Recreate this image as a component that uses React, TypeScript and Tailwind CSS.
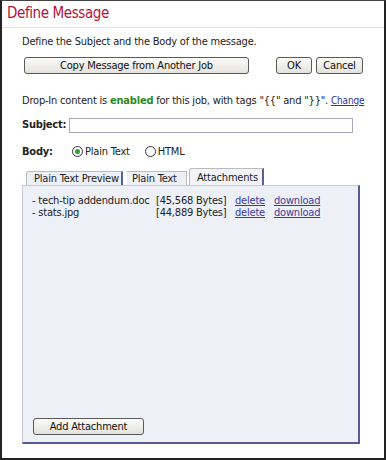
import React from "react";

const font = { fontFamily: '"DejaVu Sans Condensed", "DejaVu Sans", Tahoma, sans-serif' };

function Btn({ children, className = "" }: { children: React.ReactNode; className?: string }) {
    return (
        <button
            className={`h-[17px] shrink-0 whitespace-nowrap rounded-[3px] border border-[#5a5a5a] bg-gradient-to-b from-[#fbfbf8] to-[#e4e2dc] text-[11px] leading-[15px] text-[#111] ${className}`}
        >
            {children}
        </button>
    );
}

function Radio({ checked, label }: { checked?: boolean; label: string }) {
    return (
        <label className="flex items-center gap-[2px]">
            <span className="flex h-[11px] w-[11px] items-center justify-center rounded-full border border-[#333] bg-white">
                {checked && <span className="h-[5px] w-[5px] rounded-full bg-[#3a9a3a]" />}
            </span>
            <span>{label}</span>
        </label>
    );
}

const files = [
    { name: "- tech-tip addendum.doc", size: "[45,568 Bytes]" },
    { name: "- stats.jpg", size: "[44,889 Bytes]" },
];

export default function App() {
    return (
        <div style={font} className="flex h-[460px] w-[386px] flex-col whitespace-nowrap border-x-2 border-b-2 border-t border-x-[#222] border-b-[#222] border-t-[#444] bg-white text-[11px] tracking-[-0.2px] text-[#222]">
            <div className="h-[27px] shrink-0 border-b border-[#e4e4e4] pl-[5px] pt-[3px] text-[15px] leading-[18px] tracking-[-0.4px] text-[#b01240]">
                Define Message
            </div>

            <div className="flex flex-1 flex-col pl-[20px] pr-[22px]">
                <p className="mt-[7px] leading-[13px]">Define the Subject and the Body of the message.</p>

                <div className="mt-[9px] flex items-center">
                    <Btn className="ml-[2px] w-[225px]">Copy Message from Another Job</Btn>
                    <Btn className="ml-[27px] w-[36px]">OK</Btn>
                    <Btn className="ml-[4px] w-[47px]">Cancel</Btn>
                </div>

                <p className="mt-[20px] leading-[13px]">
                    Drop-In content is <b className="text-[#2d8a22]">enabled</b> for this job, with tags "{"{{"}" and "{"}}"}".{" "}
                    <a className="text-[10px] text-[#3333a0] underline">Change</a>
                </p>

                <div className="mt-[10px] flex items-center">
                    <span className="w-[47px] font-bold">Subject:</span>
                    <input className="h-[15px] w-[284px] border border-[#a8a8b8] bg-white outline-none" />
                </div>

                <div className="mt-[11px] flex items-center leading-[13px]">
                    <span className="w-[50px] font-bold">Body:</span>
                    <Radio checked label="Plain Text" />
                    <span className="ml-[15px]">
                        <Radio label="HTML" />
                    </span>
                </div>

                <div className="mt-[10px] flex shrink-0 items-end pl-[4px]">
                    <div className="h-[14px] w-[97px] rounded-tl-[3px] border-l border-t border-r-2 border-l-[#bbb] border-t-[#bbb] border-r-[#5c5c96] bg-[#eef0f8] pl-[7px] leading-[13px]">
                        Plain Text Preview
                    </div>
                    <div className="ml-[4px] h-[14px] w-[60px] border-t border-r border-t-[#bbb] border-r-[#bbb] bg-[#eef0f8] pl-[5px] leading-[13px]">
                        Plain Text
                    </div>
                    <div className="ml-[2px] h-[17px] w-[75px] rounded-tl-[3px] border-l border-t border-r-2 border-l-[#bbb] border-t-[#bbb] border-r-[#5c5c96] bg-[#f3f4fa] pl-[7px] pt-[2px] leading-[13px]">
                        Attachments
                    </div>
                </div>

                <div className="flex h-[259px] w-[338px] shrink-0 flex-col border-l border-t border-b-2 border-r-2 border-l-[#c8c8d8] border-t-[#c8c8d8] border-b-[#5a5a98] border-r-[#5a5a98] bg-[#eef0f8] pl-[9px] pt-[9px]">
                    {files.map((f) => (
                        <div key={f.name} className="flex leading-[12px]">
                            <span className="w-[124px]">{f.name}</span>
                            <span className="w-[79px]">{f.size}</span>
                            <a className="w-[39px] text-[#3a3a9a] underline">delete</a>
                            <a className="text-[#3a3a9a] underline">download</a>
                        </div>
                    ))}
                    <div className="flex-1" />
                    <Btn className="mb-[7px] ml-[1px] h-[15px] w-[111px] leading-[13px]">Add Attachment</Btn>
                </div>
            </div>
        </div>
    );
}
